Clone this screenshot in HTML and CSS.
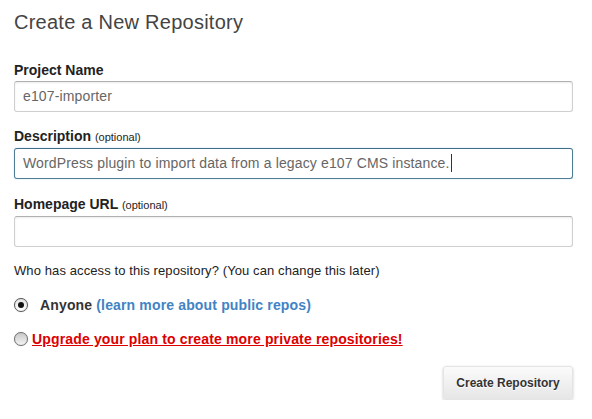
FILE: index.html
```html
<!DOCTYPE html>
<html>
<head>
<meta charset="utf-8">
<link rel="stylesheet" href="styles.css">
</head>
<body>
<div class="page">
  <h1 class="title">Create a New Repository</h1>
  <div class="field">
    <label class="label">Project Name</label>
    <div class="input">e107-importer</div>
  </div>
  <div class="field">
    <label class="label">Description <span class="opt">(optional)</span></label>
    <div class="input focus">WordPress plugin to import data from a legacy e107 CMS instance.<span class="caret"></span></div>
  </div>
  <div class="field last">
    <label class="label">Homepage URL <span class="opt">(optional)</span></label>
    <div class="input"></div>
  </div>
  <p class="question">Who has access to this repository? (You can change this later)</p>
  <div class="option first">
    <span class="radio checked"></span>
    <span class="opt-label"><b>Anyone</b> <a class="learn" href="#">(learn more about public repos)</a></span>
  </div>
  <div class="option second">
    <span class="radio"></span>
    <a class="upgrade" href="#">Upgrade your plan to create more private repositories!</a>
  </div>
  <div class="actions">
    <button class="btn">Create Repository</button>
  </div>
</div>
</body>
</html>
```
FILE: styles.css
```css
* { box-sizing: border-box; }
html, body { margin: 0; padding: 0; background: #fff; }
body { font-family: "Liberation Sans", Arial, Helvetica, sans-serif; color: #333; }
.page { padding: 10px 19px 0 14px; width: 592px; }
.title { font-size: 20px; font-weight: normal; color: #444; margin: 0; line-height: 24px; letter-spacing: 0.25px; }
.field { margin-top: 14px; }
.field:first-of-type { margin-top: 26px; }
.field.last { margin-top: 15px; }
.label { display: block; font-weight: bold; font-size: 14px; color: #222; line-height: 20px; margin-bottom: 1px; }
.opt { font-size: 11px; font-weight: normal; color: #222; }
.input {
  height: 31px; width: 559px; border: 1px solid #cfcfcf; border-top-color: #b0b0b0;
  border-radius: 3px; padding: 0 8px; font-size: 14px; line-height: 29px; color: #666;
  letter-spacing: 0.14px;
  box-shadow: inset 0 1px 2px rgba(0,0,0,0.08);
}
.input.focus { border-color: #4f7d94; border-top-color: #3f6f88; box-shadow: 0 0 2px rgba(81,167,232,0.3); }
.caret { display: inline-block; width: 1px; height: 18px; background: #333; vertical-align: middle; margin-left: 1px; position: relative; top: -1px; }
.question { margin: 14px 0 0; font-size: 13px; line-height: 20px; color: #222; letter-spacing: 0.1px; }
.option { display: flex; align-items: center; height: 20px; font-size: 14px; }
.option.first { margin-top: 14px; }
.option.second { margin-top: 14px; }
.radio {
  width: 14px; height: 14px; border-radius: 50%; border: 1px solid #6f6f6f;
  background: linear-gradient(#c8c8c8, #f4f4f4); position: relative; flex: none;
  box-shadow: 0 0 1px rgba(0,0,0,0.3);
}
.radio.checked { background: linear-gradient(#e4e4e4, #fff); border-color: #555; }
.radio.checked::after {
  content: ""; position: absolute; left: 3px; top: 3px; width: 6px; height: 6px; border-radius: 50%; background: #111;
}
.first .opt-label { margin-left: 12px; color: #333; letter-spacing: 0.15px; }
.learn { color: #4183c4; text-decoration: none; font-weight: bold; }
.upgrade { margin-left: 4px; color: #d00; font-weight: bold; text-decoration: underline; letter-spacing: 0.15px; }
.actions { display: flex; justify-content: flex-end; margin-top: 17px; }
.btn {
  font-family: "Liberation Sans", Arial, sans-serif; font-weight: bold; font-size: 12px; color: #333;
  height: 34px; width: 130px; border: 1px solid #e4e4e4; border-radius: 3px;
  background: linear-gradient(#fbfbfb, #e6e6e6); box-shadow: 0 1px 3px rgba(0,0,0,0.2);
  text-shadow: 0 1px 0 #fff;
}
```
